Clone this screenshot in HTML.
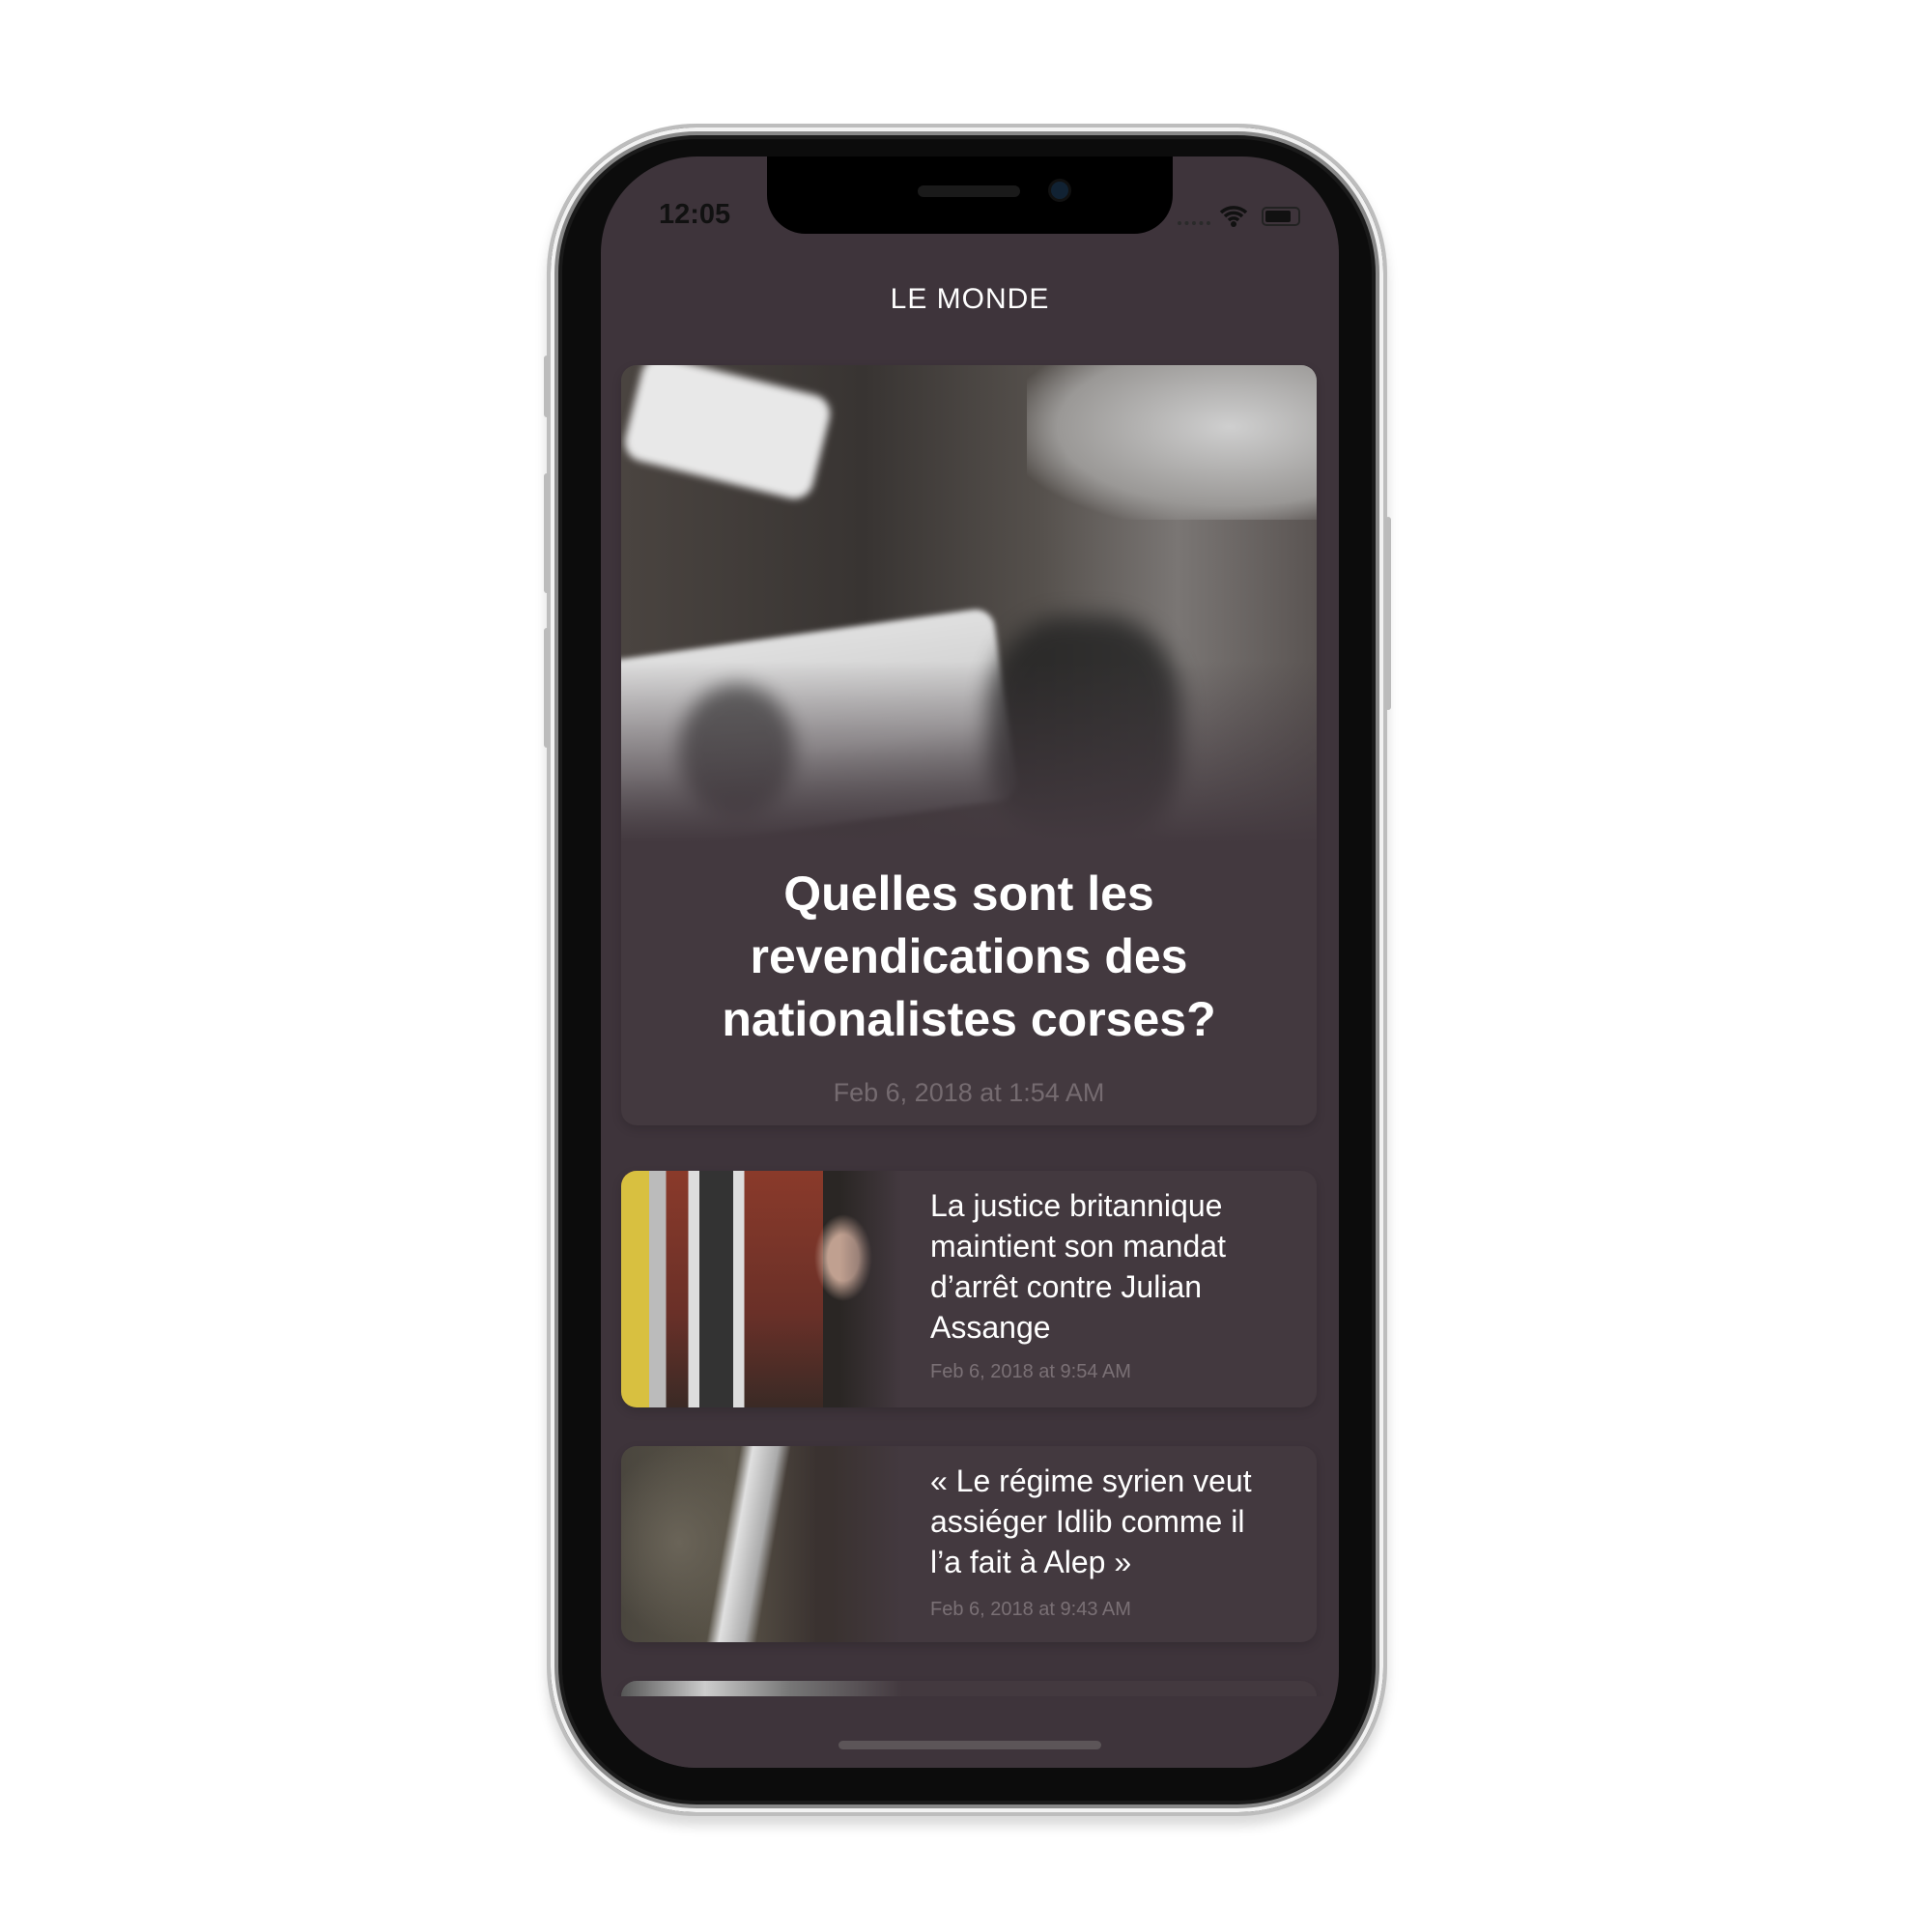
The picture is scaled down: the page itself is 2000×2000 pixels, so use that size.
<!DOCTYPE html>
<html><head><meta charset="utf-8"><style>
*{margin:0;padding:0;box-sizing:border-box}
body{width:2000px;height:2000px;background:#fff;position:relative;overflow:hidden;font-family:"Liberation Sans",sans-serif}
.abs{position:absolute}
.phone{left:566px;top:128px;width:870px;height:1752px;border-radius:155px;background:#0c0c0c;border:4px solid #bdbdbd;box-shadow:0 0 0 4px #f2f2f2 inset,0 0 0 8px #888 inset,0 0 0 12px #1a1a1a inset,0 10px 12px rgba(0,0,0,.15)}
.screen{left:622px;top:162px;width:764px;height:1668px;border-radius:100px;background:#3e343b;overflow:hidden}
.card{position:absolute;background:#43393f;border-radius:16px;box-shadow:0 4px 10px rgba(0,0,0,.15);overflow:hidden}
.t{color:#fff;font-size:32px;line-height:42px;position:absolute;left:320px;top:15px;width:350px}
.d{color:#7a7075;font-size:20px;position:absolute;left:320px}
</style></head><body>
<div class="abs phone"></div>
<div class="abs" style="left:563px;top:368px;width:6px;height:64px;background:#bbb;border-radius:3px"></div>
<div class="abs" style="left:563px;top:490px;width:6px;height:124px;background:#bbb;border-radius:3px"></div>
<div class="abs" style="left:563px;top:650px;width:6px;height:124px;background:#bbb;border-radius:3px"></div>
<div class="abs" style="left:1434px;top:535px;width:6px;height:200px;background:#bbb;border-radius:3px"></div>
<div class="abs screen">
 <div class="abs" style="left:172px;top:0;width:420px;height:80px;background:#000;border-radius:0 0 40px 40px"></div>
 <div class="abs" style="left:328px;top:30px;width:106px;height:12px;background:#1a1a1a;border-radius:6px"></div>
 <div class="abs" style="left:466px;top:26px;width:18px;height:18px;background:#123;border-radius:50%;box-shadow:0 0 0 3px #111"></div>
 <div class="abs" style="left:60px;top:44px;font-size:29px;color:#111;font-weight:bold">12:05</div>
 <div class="abs" style="left:597px;top:67px;width:34px;height:4px;border-top:4px dotted #2a2a2a"></div>
 <svg class="abs" style="left:640px;top:50px" width="30" height="24" viewBox="0 0 30 24"><path d="M2 8a19 19 0 0 1 26 0M6 12a13 13 0 0 1 18 0M10 16a7 7 0 0 1 10 0" stroke="#111" stroke-width="3.5" fill="none"/><circle cx="15" cy="20" r="3" fill="#111"/></svg>
 <div class="abs" style="left:684px;top:52px;width:40px;height:20px;border:2px solid #222;border-radius:5px;padding:2px"><div style="width:26px;height:12px;background:#111;border-radius:2px"></div></div>
 <div class="abs" style="left:0;width:764px;top:131px;text-align:center;color:#fff;font-size:30px;letter-spacing:1px">LE MONDE</div>

 <div class="card" style="left:21px;top:216px;width:720px;height:787px">
  <div class="abs" style="left:0;top:0;width:720px;height:494px;overflow:hidden;background:linear-gradient(to right,#4a4440,#383432 35%,#55504c 60%,#7a7674 80%,#5a5452)">
   <div class="abs" style="left:420px;top:0;width:300px;height:160px;background:radial-gradient(ellipse at 70% 40%,#cfcfcf,#9a9896 60%,transparent 80%)"></div>
   <div class="abs" style="left:10px;top:10px;width:200px;height:110px;background:#e8e8e8;border-radius:20px;transform:rotate(14deg);filter:blur(4px)"></div>
   <div class="abs" style="left:-40px;top:280px;width:440px;height:200px;background:linear-gradient(to bottom,#e0e0e0,#c8c8c8 60%,#888);transform:rotate(-8deg);filter:blur(3px);border-radius:20px"></div>
   <div class="abs" style="left:60px;top:330px;width:120px;height:140px;background:#333;border-radius:50%;filter:blur(10px);opacity:.7"></div>
   <div class="abs" style="left:380px;top:260px;width:200px;height:240px;background:#222;filter:blur(12px);opacity:.8;border-radius:40%"></div>
   <div class="abs" style="left:0;top:0;width:720px;height:494px;background:linear-gradient(to bottom,rgba(67,57,63,0) 62%,#43393f 100%)"></div>
  </div>
  <div class="abs" style="left:0;width:720px;top:515px;text-align:center;color:#fff;font-weight:bold;font-size:50px;line-height:65px">Quelles sont les<br>revendications des<br>nationalistes corses?</div>
  <div class="abs" style="left:0;width:720px;top:738px;text-align:center;color:#756b70;font-size:27px">Feb 6, 2018 at 1:54 AM</div>
 </div>

 <div class="card" style="left:21px;top:1050px;width:720px;height:245px">
  <div class="abs" style="left:0;top:0;width:290px;height:245px;background:
   linear-gradient(to right,rgba(67,57,63,0) 78%,#43393f),
   radial-gradient(ellipse 40px 60px at 230px 90px,#c0a090 40%,transparent 75%),
   linear-gradient(to right,transparent 72%,#2a2624 72%),
   linear-gradient(to right,#d8c040 0,#d8c040 10%,#bbb 10%,#bbb 16%,transparent 16%),
   linear-gradient(to right,transparent 24%,#ddd 24%,#ddd 28%,#333 28%,#333 40%,#ddd 40%,#ddd 44%,transparent 44%),
   linear-gradient(to bottom,#8a3a2a,#6a3028 60%,#3a2a25)"></div>
  <div class="t">La justice britannique maintient son mandat d’arrêt contre Julian Assange</div>
  <div class="d" style="top:197px">Feb 6, 2018 at 9:54 AM</div>
 </div>

 <div class="card" style="left:21px;top:1335px;width:720px;height:203px">
  <div class="abs" style="left:0;top:0;width:290px;height:203px;background:
   linear-gradient(to right,rgba(67,57,63,0) 75%,#43393f),
   linear-gradient(100deg,transparent 38%,#e0e0e0 42%,#aaa 50%,transparent 54%),
   radial-gradient(ellipse 80px 100px at 60px 100px,#6a6458,transparent),
   linear-gradient(to right,#4a463e,#5a5448 40%,#3a3230 70%)"></div>
  <div class="t">« Le régime syrien veut assiéger Idlib comme il l’a fait à Alep »</div>
  <div class="d" style="top:158px">Feb 6, 2018 at 9:43 AM</div>
 </div>

 <div class="card" style="left:21px;top:1578px;width:720px;height:16px;border-radius:16px 16px 0 0">
  <div class="abs" style="left:0;top:0;width:290px;height:16px;background:linear-gradient(to right,#555,#ccc 30%,#777 60%,#43393f)"></div>
 </div>
 <div class="abs" style="left:0;top:1594px;width:764px;height:80px;background:#3e343b"></div>
 <div class="abs" style="left:246px;top:1640px;width:272px;height:9px;background:#5c5558;border-radius:5px"></div>
</div>
</body></html>
